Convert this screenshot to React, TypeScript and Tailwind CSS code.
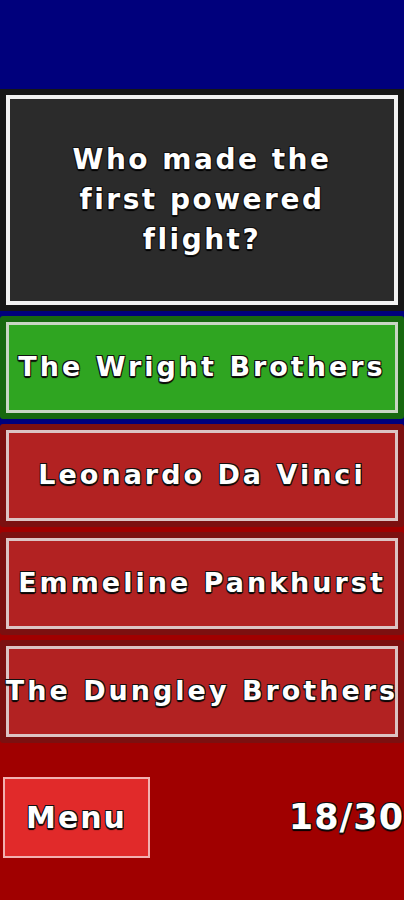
const answers = [
  { label: 'The Wright Brothers', correct: true },
  { label: 'Leonardo Da Vinci', correct: false },
  { label: 'Emmeline Pankhurst', correct: false },
  { label: 'The Dungley Brothers', correct: false },
]

const outline =
  '[text-shadow:1px_1px_0_#111,-1px_-1px_0_#111,1px_-1px_0_#111,-1px_1px_0_#111,0_2px_1px_#000]'

export default function App() {
  return (
    <div className="min-h-[900px] w-[404px] overflow-hidden bg-[linear-gradient(to_bottom,#00007c_0,#00007c_450px,#a00000_450px,#a00000_100%)] font-['DejaVu_Sans',sans-serif] text-white">
      {/* Question */}
      <div className="pt-[89px]">
        <div className="h-[222px] bg-[#161616] p-[6px]">
          <div className="h-full border-4 border-[#f2f2f2] bg-[#2b2b2b] flex items-center justify-center px-4">
            <p className={`text-[28px] leading-[40px] font-bold tracking-[2.5px] text-center ${outline}`}>
              Who made the
              <br />
              first powered
              <br />
              flight?
            </p>
          </div>
        </div>
      </div>

      {/* Answers */}
      <div className="flex flex-col gap-[5px] mt-[5px]">
        {answers.map(a => (
          <div
            key={a.label}
            className={`h-[103px] p-[6px] rounded-[3px] ${a.correct ? 'bg-[#17680f]' : 'bg-[#7c1010]'}`}
          >
            <div
              className={`h-full border-[3px] flex items-center justify-center ${
                a.correct ? 'border-[#c9d6c4] bg-[#2fa521]' : 'border-[#dcc4c4] bg-[#b22222]'
              }`}
            >
              <span className={`whitespace-nowrap text-[27px] font-bold tracking-[3px] ${outline}`}>
                {a.label}
              </span>
            </div>
          </div>
        ))}
      </div>

      {/* Footer */}
      <div className="flex items-center justify-between pt-[34px] pl-[3px]">
        <button className="w-[147px] h-[81px] bg-[#e12a2a] border-2 border-[#f2b0b0] flex items-center justify-center">
          <span className={`text-[30px] font-bold tracking-[2px] ${outline}`}>Menu</span>
        </button>
        <span className={`text-[35px] font-bold tracking-[1px] ${outline}`}>18/30</span>
      </div>
    </div>
  )
}
